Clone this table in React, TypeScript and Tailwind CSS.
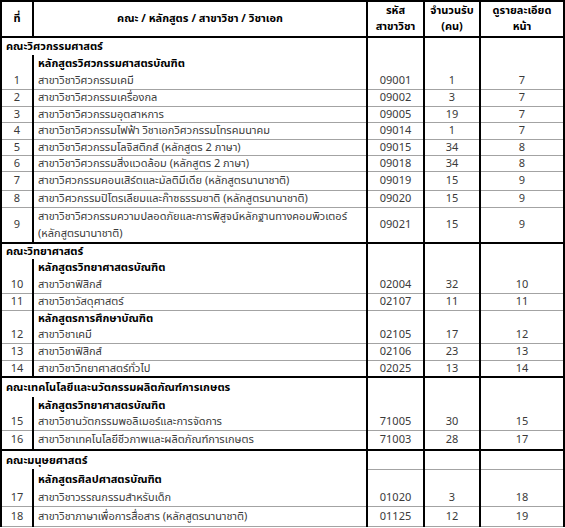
import React from "react";

interface Item {
    n: string;
    name: React.ReactNode;
    code: string;
    count: string;
    page: string;
    h: string;
}

interface Group {
    heading: string;
    hh: string;
    items: Item[];
}

interface Section {
    faculty: string;
    fh: string;
    split: boolean;
    groups: Group[];
}

const sections: Section[] = [
    {
        faculty: "คณะวิศวกรรมศาสตร์",
        fh: "h-[18px]",
        split: false,
        groups: [
            {
                heading: "หลักสูตรวิศวกรรมศาสตรบัณฑิต",
                hh: "h-[17px]",
                items: [
                    { n: "1", name: "สาขาวิชาวิศวกรรมเคมี", code: "09001", count: "1", page: "7", h: "h-[17px]" },
                    { n: "2", name: "สาขาวิชาวิศวกรรมเครื่องกล", code: "09002", count: "3", page: "7", h: "h-[17px]" },
                    { n: "3", name: "สาขาวิชาวิศวกรรมอุตสาหการ", code: "09005", count: "19", page: "7", h: "h-[16px]" },
                    { n: "4", name: "สาขาวิชาวิศวกรรมไฟฟ้า วิชาเอกวิศวกรรมโทรคมนาคม", code: "09014", count: "1", page: "7", h: "h-[17px]" },
                    { n: "5", name: "สาขาวิชาวิศวกรรมโลจิสติกส์ (หลักสูตร 2 ภาษา)", code: "09015", count: "34", page: "8", h: "h-[16px]" },
                    { n: "6", name: "สาขาวิชาวิศวกรรมสิ่งแวดล้อม (หลักสูตร 2 ภาษา)", code: "09018", count: "34", page: "8", h: "h-[16px]" },
                    { n: "7", name: "สาขาวิศวกรรมคอนเสิร์ตและมัลติมีเดีย (หลักสูตรนานาชาติ)", code: "09019", count: "15", page: "9", h: "h-[19px]" },
                    { n: "8", name: "สาขาวิศวกรรมปิโตรเลียมและก๊าซธรรมชาติ (หลักสูตรนานาชาติ)", code: "09020", count: "15", page: "9", h: "h-[17px]" },
                    {
                        n: "9",
                        name: (
                            <span className="block leading-[17px]">
                                สาขาวิชาวิศวกรรมความปลอดภัยและการพิสูจน์หลักฐานทางคอมพิวเตอร์
                                <br />
                                (หลักสูตรนานาชาติ)
                            </span>
                        ),
                        code: "09021",
                        count: "15",
                        page: "9",
                        h: "h-[36px]",
                    },
                ],
            },
        ],
    },
    {
        faculty: "คณะวิทยาศาสตร์",
        fh: "h-[16px]",
        split: false,
        groups: [
            {
                heading: "หลักสูตรวิทยาศาสตรบัณฑิต",
                hh: "h-[17px]",
                items: [
                    { n: "10", name: "สาขาวิชาฟิสิกส์", code: "02004", count: "32", page: "10", h: "h-[17px]" },
                    { n: "11", name: "สาขาวิชาวัสดุศาสตร์", code: "02107", count: "11", page: "11", h: "h-[17px]" },
                ],
            },
            {
                heading: "หลักสูตรการศึกษาบัณฑิต",
                hh: "h-[17px]",
                items: [
                    { n: "12", name: "สาขาวิชาเคมี", code: "02105", count: "17", page: "12", h: "h-[16px]" },
                    { n: "13", name: "สาขาวิชาฟิสิกส์", code: "02106", count: "23", page: "13", h: "h-[17px]" },
                    { n: "14", name: "สาขาวิชาวิทยาศาสตร์ทั่วไป", code: "02025", count: "13", page: "14", h: "h-[17px]" },
                ],
            },
        ],
    },
    {
        faculty: "คณะเทคโนโลยีและนวัตกรรมผลิตภัณฑ์การเกษตร",
        fh: "h-[20px]",
        split: false,
        groups: [
            {
                heading: "หลักสูตรวิทยาศาสตรบัณฑิต",
                hh: "h-[16px]",
                items: [
                    { n: "15", name: "สาขาวิชานวัตกรรมพอลิเมอร์และการจัดการ", code: "71005", count: "30", page: "15", h: "h-[17px]" },
                    { n: "16", name: "สาขาวิชาเทคโนโลยีชีวภาพและผลิตภัณฑ์การเกษตร", code: "71003", count: "28", page: "17", h: "h-[20px]" },
                ],
            },
        ],
    },
    {
        faculty: "คณะมนุษยศาสตร์",
        fh: "h-[19px]",
        split: true,
        groups: [
            {
                heading: "หลักสูตรศิลปศาสตรบัณฑิต",
                hh: "h-[20px]",
                items: [
                    { n: "17", name: "สาขาวิชาวรรณกรรมสำหรับเด็ก", code: "01020", count: "3", page: "18", h: "h-[17px]" },
                    { n: "18", name: "สาขาวิชาภาษาเพื่อการสื่อสาร (หลักสูตรนานาชาติ)", code: "01125", count: "12", page: "19", h: "h-[20px]" },
                ],
            },
        ],
    },
];

const v = "border-x-2 border-x-black";
const thick = "border-t-2 border-t-black";
const thin = "border-t border-t-[#a3a3a3]";

const DataCells = ({ item, top, rowSpan, bottom }: { item: Item; top: string; rowSpan?: number; bottom?: boolean }) => {
    const align = bottom ? "align-bottom pb-[1px]" : "align-middle";
    return (
        <>
            <td rowSpan={rowSpan} className={`${v} ${top} ${align} text-center`}>{item.code}</td>
            <td rowSpan={rowSpan} className={`${v} ${top} ${align} text-center`}>{item.count}</td>
            <td rowSpan={rowSpan} className={`${v} ${top} ${align} text-center`}>{item.page}</td>
        </>
    );
};

export default function App() {
    return (
        <div className="w-[565px] h-[528px] overflow-hidden bg-white text-[11px] leading-[15px] text-[#3a3a3a] font-['Tahoma','Noto_Sans_Thai','Noto_Sans',sans-serif]">
            <table className="w-[563px] table-fixed border-collapse">
                <colgroup>
                    <col className="w-[32px]" />
                    <col className="w-[334px]" />
                    <col className="w-[57px]" />
                    <col className="w-[56px]" />
                    <col className="w-[84px]" />
                </colgroup>
                <thead>
                    <tr className="h-[36px] text-black font-bold leading-[16px]">
                        <th className="border-2 border-black font-bold">ที่</th>
                        <th className="border-2 border-black font-bold">คณะ / หลักสูตร / สาขาวิชา / วิชาเอก</th>
                        <th className="border-2 border-black font-bold">รหัส<br />สาขาวิชา</th>
                        <th className="border-2 border-black font-bold">จำนวนรับ<br />(คน)</th>
                        <th className="border-2 border-black font-bold">ดูรายละเอียด<br />หน้า</th>
                    </tr>
                </thead>
                <tbody>
                    {sections.map((s, si) => {
                        const lastSection = si === sections.length - 1;
                        return (
                            <React.Fragment key={s.faculty}>
                                {/* faculty row */}
                                <tr className={s.fh}>
                                    <td colSpan={2} className={`${v} ${thick} pl-[4px] font-bold text-black`}>{s.faculty}</td>
                                    {s.split ? (
                                        <>
                                            <td className={`${v} ${thick}`} />
                                            <td className={`${v} ${thick}`} />
                                            <td className={`${v} ${thick}`} />
                                        </>
                                    ) : (
                                        <DataCells item={s.groups[0].items[0]} top={thick} rowSpan={3} bottom />
                                    )}
                                </tr>
                                {s.groups.map((g, gi) => {
                                    const headTop = gi > 0 ? thin : "";
                                    return (
                                        <React.Fragment key={g.heading + gi}>
                                            <tr className={g.hh}>
                                                <td className={`${v} ${headTop}`} />
                                                <td className={`${v} ${headTop} pl-[4px] font-bold text-black`}>{g.heading}</td>
                                                {(gi > 0 || s.split) && (
                                                    <DataCells item={g.items[0]} top={thin} rowSpan={2} bottom />
                                                )}
                                            </tr>
                                            {g.items.map((it, ii) => {
                                                const top = ii > 0 ? thin : "";
                                                const isLast = lastSection && gi === s.groups.length - 1 && ii === g.items.length - 1;
                                                const bot = isLast ? "border-b border-b-[#a3a3a3]" : "";
                                                return (
                                                    <tr key={it.n} className={it.h}>
                                                        <td className={`${v} ${top} ${bot} text-center`}>{it.n}</td>
                                                        <td className={`${v} ${top} ${bot} pl-[4px]`}>{it.name}</td>
                                                        {ii > 0 && <DataCells item={it} top={`${top} ${bot}`} />}
                                                    </tr>
                                                );
                                            })}
                                        </React.Fragment>
                                    );
                                })}
                            </React.Fragment>
                        );
                    })}
                </tbody>
            </table>
        </div>
    );
}
